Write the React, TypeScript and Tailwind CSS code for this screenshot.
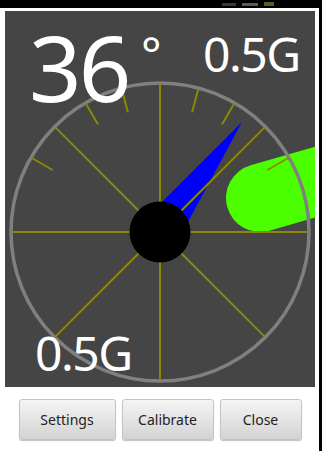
import React from "react";

const CX = 155;
const CY = 221;
const R = 149;

const rad = (deg: number) => (deg * Math.PI) / 180;

// angle measured clockwise from straight up
const pt = (deg: number, r: number) => ({
  x: CX + r * Math.sin(rad(deg)),
  y: CY - r * Math.cos(rad(deg)),
});

function Dial() {
  const spokes = [0, 45, 90, 135, 180, 225, 270, 315];
  const ticks = [-60, -30, -15, 15, 30, 60];

  return (
    <svg width="310" height="376" viewBox="0 0 310 376" className="absolute inset-0 overflow-hidden">
      {/* green blob */}
      <g transform="rotate(-16 255 187)">
        <rect x="221" y="153" width="200" height="68" rx="34" fill="#4cff00" />
      </g>

      {/* needle */}
      <polygon points="237,111 171,233 139,209" fill="#0000ff" />

      {/* outer ring */}
      <circle cx={CX} cy={CY} r={R} fill="none" stroke="#808080" strokeWidth="3.5" />

      {/* spokes */}
      {spokes.map((a) => {
        const p = pt(a, R - 1);
        return (
          <line key={a} x1={CX} y1={CY} x2={p.x} y2={p.y} stroke="#8a8a00" strokeWidth="2" />
        );
      })}

      {/* ticks */}
      {ticks.map((a) => {
        const p1 = pt(a, 124);
        const p2 = pt(a, 148);
        return (
          <line key={a} x1={p1.x} y1={p1.y} x2={p2.x} y2={p2.y} stroke="#8a8a00" strokeWidth="2" />
        );
      })}

      {/* hub */}
      <circle cx={CX} cy={CY} r="30.5" fill="#000" />
    </svg>
  );
}

function Btn({ label, w }: { label: string; w: string }) {
  return (
    <button
      className={`${w} h-[41px] rounded-[3px] border border-[#c4c4c4] bg-gradient-to-b from-[#f5f5f5] to-[#d3d3d3] text-[14px] text-[#222] shadow-[0_1px_1px_rgba(0,0,0,0.25)]`}
    >
      {label}
    </button>
  );
}

export default function App() {
  return (
    <div
      className="w-[322px] h-[451px] flex flex-col bg-white overflow-hidden"
      style={{ fontFamily: '"Noto Sans", "Open Sans", sans-serif' }}
    >
      {/* status bar */}
      <div className="h-[8px] bg-black flex items-center justify-end gap-[6px] pr-[48px]">
        <div className="w-[14px] h-[3px] bg-[#3a3a3a]" />
        <div className="w-[16px] h-[3px] bg-[#5a5a5a]" />
        <div className="w-[10px] h-[4px] bg-[#5c5c20]" />
      </div>

      <div className="flex flex-1">
        <div className="flex-1 flex flex-col pt-[3px] pl-[5px]">
          {/* gauge panel */}
          <div className="relative w-[310px] h-[376px] bg-[#454545]">
            <Dial />
            <div className="absolute left-[24px] top-[-8px] text-[92px] leading-[1.4] text-white">
              <span className="tracking-[-3px]">3</span>6
            </div>
            <div className="absolute left-[136px] top-[19px] text-[48px] leading-none text-white">
              °
            </div>
            <div className="absolute left-[198px] top-[19px] text-[48px] leading-none text-white">
              <span className="tracking-[-1.5px]">0.5</span>G
            </div>
            <div className="absolute left-[30px] top-[318px] text-[48px] leading-none text-white">
              <span className="tracking-[-1.5px]">0.5</span>G
            </div>
          </div>

          {/* buttons */}
          <div className="flex justify-center gap-[6px] mt-[12px] w-[310px]">
            <Btn label="Settings" w="w-[97px]" />
            <Btn label="Calibrate" w="w-[92px]" />
            <Btn label="Close" w="w-[82px]" />
          </div>
        </div>
        <div className="w-[3px] bg-black" />
      </div>
    </div>
  );
}
